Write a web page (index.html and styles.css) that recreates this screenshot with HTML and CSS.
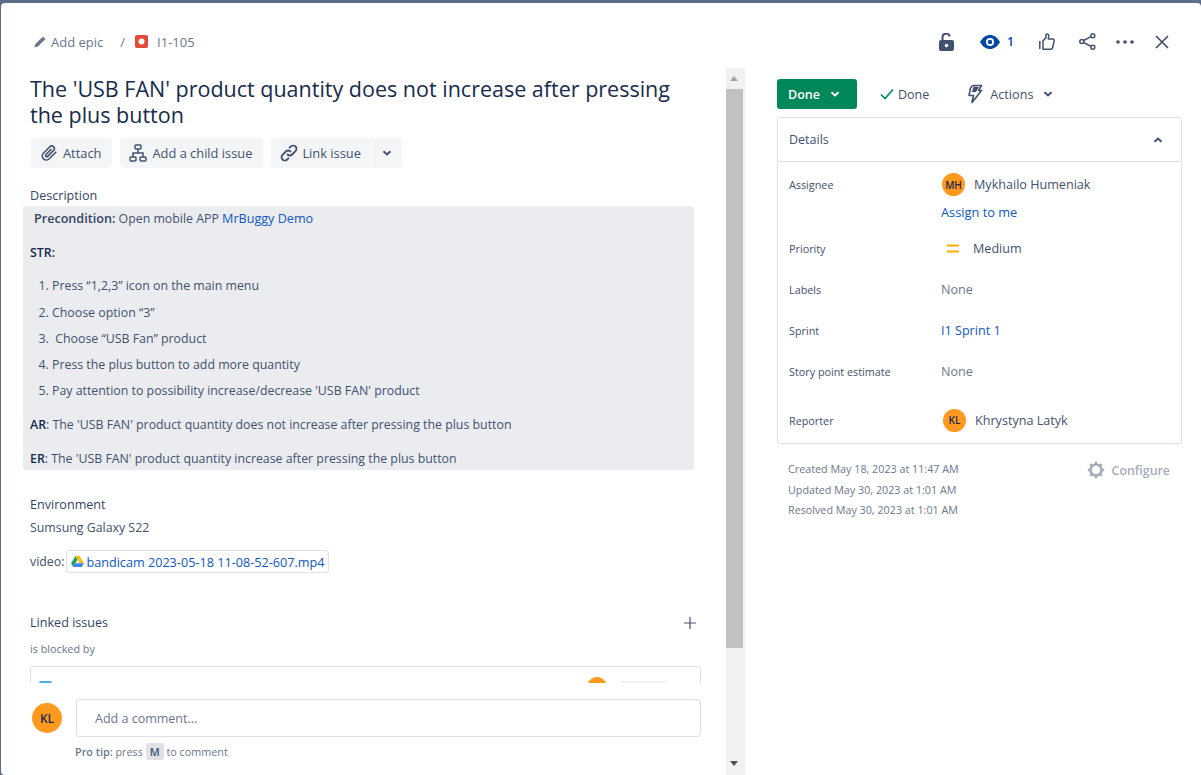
FILE: index.html
```html
<!DOCTYPE html>
<html lang="en">
<head>
    <meta charset="UTF-8">
    <meta name="viewport" content="width=device-width, initial-scale=1.0">
    <title>I1-105</title>
    <link rel="stylesheet" href="styles.css">
</head>
<body>
    <div class="modal">
        <header class="top-bar">
            <div class="crumbs">
                <svg class="crumb-pencil" width="14" height="14" viewBox="0 0 14 14"><path d="M10 1.500l2.500 2.500-7.600 7.600-3.400.9.900-3.400z" fill="#6b778c"/></svg>
                <span class="crumb-epic">Add epic</span>
                <span class="crumb-slash">/</span>
                <svg class="crumb-bug" width="13" height="13" viewBox="0 0 13 13"><rect width="13" height="13" rx="2" fill="#e5493a"/><circle cx="6.500" cy="6.500" r="3" fill="#fff"/></svg>
                <span class="crumb-key">I1-105</span>
            </div>
            <div class="top-actions">
                <svg class="act-lock" width="15" height="18" viewBox="0 0 15 18"><path d="M3.500 8V4.500a3.700 3.700 0 0 1 7.300-1" fill="none" stroke="#42526e" stroke-width="2"/><rect y="7" width="15" height="11" rx="2" fill="#42526e"/><circle cx="7.500" cy="12.500" r="1.700" fill="#fff"/></svg>
                <span class="watch">
                    <svg width="20" height="14" viewBox="0 0 20 14"><path d="M0 7c2.500-4.500 6-7 10-7s7.500 2.500 10 7c-2.500 4.500-6 7-10 7S2.500 11.500 0 7z" fill="#0747a6"/><circle cx="10" cy="7" r="4" fill="#fff"/><circle cx="10" cy="7" r="2.200" fill="#0747a6"/></svg>
                    <span>1</span>
                </span>
                <svg class="act-like" width="16" height="17" viewBox="0 0 16 17"><path d="M.8 8v8M4 8l3-3.500V1.700c0-1.200 2.600-1.200 2.800.8L9.300 6h4.200c1.300 0 1.900 1 1.600 2.200l-1.400 6.300c-.2 1-.9 1.700-2 1.700H4z" fill="none" stroke="#42526e" stroke-width="1.500" stroke-linejoin="round"/></svg>
                <svg class="act-share" width="17" height="17" viewBox="0 0 17 17"><g fill="none" stroke="#42526e" stroke-width="1.500"><circle cx="13.800" cy="2.800" r="2"/><circle cx="2.800" cy="8.500" r="2"/><circle cx="13.800" cy="14.200" r="2"/><path d="M4.600 7.500l7.400-3.800M4.600 9.500l7.400 3.800"/></g></svg>
                <svg class="act-more" width="18" height="4" viewBox="0 0 18 4"><g fill="#42526e"><circle cx="2" cy="2" r="1.800"/><circle cx="9" cy="2" r="1.800"/><circle cx="16" cy="2" r="1.800"/></g></svg>
                <svg class="act-close" width="14" height="14" viewBox="0 0 14 14"><path d="M1 1l12 12M13 1L1 13" stroke="#42526e" stroke-width="1.700" fill="none"/></svg>
            </div>
        </header>

        <div class="columns">
            <section class="left-col">
                <div class="left-main">
                    <div class="scroll-area">
                        <h1 class="issue-title">The 'USB FAN' product quantity does not increase after pressing the plus button</h1>
                        <div class="tool-row">
                            <button class="tool-btn">
                                <svg width="18" height="18" viewBox="0 0 18 18"><path d="M15.800 8.200l-6.600 6.600a3.900 3.900 0 0 1-5.800-5.500l6.400-6.500a2.600 2.600 0 0 1 3.800 3.600l-6 6a1.200 1.200 0 0 1-1.800-1.700l5.300-5.400" fill="none" stroke="#42526e" stroke-width="1.600" stroke-linecap="round"/></svg>
                                Attach
                            </button>
                            <button class="tool-btn">
                                <svg width="18" height="18" viewBox="0 0 18 18"><g fill="none" stroke="#42526e" stroke-width="1.500"><rect x="6" y="1" width="6" height="4" rx="1"/><rect x="1" y="13" width="6" height="4" rx="1"/><rect x="11" y="13" width="6" height="4" rx="1"/><path d="M9 5v4M4 13v-4h10v4"/></g></svg>
                                Add a child issue
                            </button>
                            <div class="split-btn">
                                <button class="tool-btn split-main">
                                    <svg width="18" height="18" viewBox="0 0 18 18"><g fill="none" stroke="#42526e" stroke-width="1.800" stroke-linecap="round"><path d="M7.500 10.500a3.300 3.300 0 0 0 4.700 0l3.300-3.300a3.300 3.300 0 0 0-4.700-4.700L9.600 3.700"/><path d="M10.500 7.500a3.300 3.300 0 0 0-4.700 0l-3.300 3.300a3.300 3.300 0 0 0 4.700 4.700l1.200-1.200"/></g></svg>
                                    Link issue
                                </button>
                                <button class="tool-btn split-more">
                                    <svg width="10" height="6" viewBox="0 0 10 6"><path d="M1.500 1.200L5 4.500l3.500-3.300" fill="none" stroke="#42526e" stroke-width="2"/></svg>
                                </button>
                            </div>
                        </div>

                        <h2 class="field-heading heading-desc">Description</h2>
                        <div class="description">
                            <p class="precondition"><strong>Precondition:</strong> Open mobile APP <a href="#">MrBuggy Demo</a></p>
                            <p class="str-line"><strong class="dark">STR:</strong></p>
                            <ol class="steps">
                                <li>Press “1,2,3” icon on the main menu</li>
                                <li>Choose option “3”</li>
                                <li>&nbsp;Choose “USB Fan” product</li>
                                <li>Press the plus button to add more quantity</li>
                                <li>Pay attention to possibility increase/decrease 'USB FAN' product</li>
                            </ol>
                            <p><strong class="dark">AR</strong>: The 'USB FAN' product quantity does not increase after pressing the plus button</p>
                            <p><strong class="dark">ER</strong>: The 'USB FAN' product quantity increase after pressing the plus button</p>
                        </div>

                        <h2 class="field-heading heading-env">Environment</h2>
                        <p class="env-line">Sumsung Galaxy S22</p>
                        <p class="video-line">video:
                            <a class="file-chip" href="#">
                                <svg width="13" height="11" viewBox="0 0 14 12"><path d="M4.700 0h4.600l4.700 8H9.300z" fill="#fbbc04"/><path d="M4.700 0L0 8l2.300 4 4.700-8z" fill="#1ea362"/><path d="M2.300 12h9.400L14 8H4.700z" fill="#4285f4"/></svg>
                                bandicam 2023-05-18 11-08-52-607.mp4
                            </a>
                        </p>

                        <div class="linked-head">
                            <h2 class="field-heading">Linked issues</h2>
                            <svg width="12" height="12" viewBox="0 0 12 12"><path d="M6 0v12M0 6h12" stroke="#42526e" stroke-width="1.200" fill="none"/></svg>
                        </div>
                        <div class="blocked-label">is blocked by</div>
                        <div class="linked-card">
                            <span class="linked-type"></span>
                            <span class="linked-avatar"></span>
                            <span class="linked-status"></span>
                        </div>
                    </div>
                    <div class="comment-box">
                        <span class="avatar avatar-lg">KL</span>
                        <div class="comment-body">
                            <div class="comment-input">Add a comment...</div>
                            <div class="pro-tip"><strong>Pro tip:</strong> press <kbd>M</kbd> to comment</div>
                        </div>
                    </div>
                </div>
                <div class="scrollbar">
                    <span class="arrow arrow-up"></span>
                    <span class="thumb"></span>
                    <span class="arrow arrow-down"></span>
                </div>
            </section>

            <aside class="right-col">
                <div class="status-row">
                    <button class="status-btn">Done
                        <svg width="10" height="6" viewBox="0 0 10 6"><path d="M1.500 1.200L5 4.500l3.500-3.300" fill="none" stroke="#fff" stroke-width="2"/></svg>
                    </button>
                    <span class="resolution">
                        <svg width="14" height="12" viewBox="0 0 14 12"><path d="M1 6.500l4 4L13 1.500" fill="none" stroke="#00875a" stroke-width="1.700"/></svg>
                        Done
                    </span>
                    <span class="actions">
                        <svg width="16" height="20" viewBox="0 0 16 20"><path d="M7 1.500h7.500L11.500 6.500h3L5 18.500l1.500-7H2L3.500 4.500C3.700 3 5.500 1.500 7 1.500z" fill="none" stroke="#42526e" stroke-width="1.600" stroke-linejoin="round"/><path d="M6.500 2.500L5 8h4l3-5z" fill="#42526e"/></svg>
                        Actions
                        <svg class="actions-chevron" width="10" height="6" viewBox="0 0 10 6"><path d="M1.500 1.200L5 4.500l3.500-3.300" fill="none" stroke="#42526e" stroke-width="2"/></svg>
                    </span>
                </div>

                <div class="details">
                    <div class="details-head">
                        <span>Details</span>
                        <svg width="10" height="6" viewBox="0 0 10 6"><path d="M1.500 4.800L5 1.500l3.500 3.300" fill="none" stroke="#42526e" stroke-width="2"/></svg>
                    </div>
                    <div class="details-body">
                        <div class="row row-assignee">
                            <span class="row-label">Assignee</span>
                            <div class="row-value">
                                <div class="person assignee"><span class="avatar">MH</span>Mykhailo Humeniak</div>
                                <a class="assign-me" href="#">Assign to me</a>
                            </div>
                        </div>
                        <div class="row row-plain">
                            <span class="row-label">Priority</span>
                            <div class="row-value person">
                                <svg class="prio" width="12" height="9" viewBox="0 0 12 9"><path d="M0 1.500h12M0 7.500h12" stroke="#ffab00" stroke-width="2" fill="none"/></svg>
                                Medium
                            </div>
                        </div>
                        <div class="row row-plain">
                            <span class="row-label">Labels</span>
                            <div class="row-value muted">None</div>
                        </div>
                        <div class="row row-plain">
                            <span class="row-label">Sprint</span>
                            <div class="row-value"><a href="#">I1 Sprint 1</a></div>
                        </div>
                        <div class="row row-plain">
                            <span class="row-label">Story point estimate</span>
                            <div class="row-value muted">None</div>
                        </div>
                        <div class="row row-reporter">
                            <span class="row-label">Reporter</span>
                            <div class="row-value person reporter"><span class="avatar">KL</span>Khrystyna Latyk</div>
                        </div>
                    </div>
                </div>

                <div class="meta">
                    <div class="dates">
                        <div>Created May 18, 2023 at 11:47 AM</div>
                        <div>Updated May 30, 2023 at 1:01 AM</div>
                        <div>Resolved May 30, 2023 at 1:01 AM</div>
                    </div>
                    <div class="configure">
                        <svg width="18" height="18" viewBox="0 0 18 18"><circle cx="9" cy="9" r="5.500" fill="none" stroke="#a5adba" stroke-width="2.600"/><path d="M9 .8v3M9 14.200v3M.8 9h3M14.200 9h3M3.200 3.200l2 2M12.800 12.800l2 2M14.800 3.200l-2 2M5.200 12.800l-2 2" stroke="#a5adba" stroke-width="2.400"/></svg>
                        Configure
                    </div>
                </div>
            </aside>
        </div>
    </div>
</body>
</html>
```

FILE: styles.css
```css
* {
    box-sizing: border-box;
}

html, body {
    height: 100%;
}

body {
    margin: 0;
    padding-top: 3px;
    padding-left: 1px;
    background-color: #5d6c88;
    font-family: 'Open Sans', 'Noto Sans', sans-serif;
    font-size: 12.350px;
    color: #42526e;
    overflow: hidden;
}

a {
    color: #0f57c0;
    text-decoration: none;
}

button {
    font-family: inherit;
}

.modal {
    height: 772px;
    background-color: #fff;
    border-radius: 4px 4px 0 4px;
    overflow: hidden;
}

.top-bar {
    height: 65px;
    padding: 12px 32px 0 32px;
    display: flex;
    align-items: center;
    justify-content: space-between;
}

.crumbs {
    display: flex;
    align-items: center;
    font-size: 13px;
    color: #6b778c;
}

.crumb-epic {
    margin-left: 4px;
}

.crumb-slash {
    margin: 0 10px 0 17px;
}

.crumb-key {
    margin-left: 9px;
}

.top-actions {
    display: flex;
    align-items: center;
    color: #0747a6;
}

.watch {
    display: flex;
    align-items: center;
    gap: 7px;
    margin: 0 25px 0 26px;
    font-weight: 600;
}

.act-share {
    margin-left: 23.500px;
}

.act-more {
    margin-left: 20.500px;
}

.act-close {
    margin-left: 21px;
}

.columns {
    display: flex;
    height: 707px;
}

.left-col {
    width: 744px;
    display: flex;
    flex-shrink: 0;
}

.left-main {
    width: 724px;
    display: flex;
    flex-direction: column;
}

.scroll-area {
    height: 615px;
    padding: 8px 24px 0 29px;
    overflow: hidden;
}

.issue-title {
    margin: 0;
    font-size: 21.500px;
    line-height: 26px;
    font-weight: 500;
    color: #172b4d;
}

.tool-row {
    display: flex;
    gap: 8px;
    margin: 10px 0 0 1px;
}

.tool-btn {
    height: 30px;
    padding: 0 11px 0 9px;
    display: flex;
    align-items: center;
    gap: 5px;
    border: none;
    border-radius: 3px;
    background-color: #f4f5f7;
    color: #42526e;
    font-size: 12.850px;
}

.split-btn {
    display: flex;
    gap: 1px;
}

.split-main {
    width: 100px;
    padding-right: 0;
    gap: 4px;
    border-radius: 3px 0 0 3px;
}

.split-more {
    width: 30px;
    padding: 0;
    justify-content: center;
    border-radius: 0 3px 3px 0;
}

.field-heading {
    margin: 0;
    font-size: 12.600px;
    line-height: 16px;
    font-weight: 500;
    color: #344563;
}

.heading-desc {
    margin-top: 20px;
}

.description {
    margin: 2px 0 0 -7px;
    width: 671px;
    height: 264px;
    padding: 3px 7px;
    background-color: #ebecf0;
    border-radius: 3px;
    line-height: 20px;
}

.description p {
    margin: 0 0 14px;
}

.description .str-line {
    margin-bottom: 13px;
}

.precondition {
    padding-left: 4px;
}

.precondition strong,
.precondition a {
    font-size: 12.600px;
}

.description strong {
    font-weight: 600;
    color: #344563;
}

.description strong.dark {
    color: #172b4d;
}

.steps {
    margin: 0 0 14px;
    padding-left: 22px;
}

.steps li {
    margin-bottom: 6px;
}

.steps li:first-child {
    margin-bottom: 7px;
}

.steps li:last-child {
    margin-bottom: 0;
}

.heading-env {
    margin-top: 27px;
}

.env-line {
    margin: 5px 0 0;
    line-height: 20px;
}

.video-line {
    margin: 12px 0 0;
    line-height: 22px;
    display: flex;
    align-items: center;
    gap: 2px;
}

.file-chip {
    display: flex;
    align-items: center;
    gap: 2px;
    height: 23px;
    padding: 0 4px 0 4px;
    border: 1px solid #dfe1e6;
    border-radius: 3px;
    font-size: 12.650px;
}

.linked-head {
    margin-top: 42px;
    display: flex;
    align-items: center;
    justify-content: space-between;
    padding-right: 5px;
}

.blocked-label {
    margin-top: 10px;
    font-size: 10.800px;
    font-weight: 500;
    color: #6b778c;
}

.linked-card {
    position: relative;
    margin-top: 10px;
    height: 60px;
    border: 1px solid #dfe1e6;
    border-radius: 3px;
}

.linked-type {
    position: absolute;
    left: 8px;
    top: 14px;
    width: 13px;
    height: 13px;
    border-radius: 2px;
    background-color: #4bade8;
}

.linked-avatar {
    position: absolute;
    left: 556px;
    top: 10px;
    width: 20px;
    height: 20px;
    border-radius: 50%;
    background-color: #ff991f;
}

.linked-status {
    position: absolute;
    left: 589px;
    top: 14px;
    width: 47px;
    height: 18px;
    border-radius: 3px;
    background-color: #eef2f2;
}

.comment-box {
    display: flex;
    gap: 14px;
    padding: 21px 24px 0 31px;
    background-color: #fff;
}

.avatar {
    width: 23px;
    height: 23px;
    border-radius: 50%;
    background-color: #ff991f;
    color: #172b4d;
    font-size: 10px;
    font-weight: 600;
    display: inline-flex;
    align-items: center;
    justify-content: center;
    flex-shrink: 0;
}

.avatar-lg {
    width: 30px;
    height: 30px;
    margin-top: -1px;
    font-size: 12px;
}

.comment-body {
    flex: 1;
    margin-top: -5px;
}

.comment-input {
    height: 38px;
    padding-left: 18px;
    display: flex;
    align-items: center;
    border: 1px solid #dfe1e6;
    border-radius: 3px;
    font-size: 12.500px;
    color: #6b778c;
}

.pro-tip {
    margin: 7px 0 0 -1px;
    font-size: 10.800px;
    color: #6b778c;
}

.pro-tip strong {
    font-weight: 600;
}

kbd {
    padding: 1px 4px;
    border-radius: 3px;
    background-color: #dfe1e6;
    color: #42526e;
    font-family: inherit;
    font-weight: 600;
}

.scrollbar {
    width: 19px;
    margin-left: 1px;
    background-color: #f1f1f1;
    display: flex;
    flex-direction: column;
    align-items: flex-start;
    flex-shrink: 0;
}

.arrow {
    width: 0;
    height: 0;
    margin: 8px 0 8px 4px;
    border-left: 4px solid transparent;
    border-right: 4px solid transparent;
}

.arrow-up {
    border-bottom: 5px solid #a3a3a3;
}

.arrow-down {
    margin-top: auto;
    margin-bottom: 9px;
    border-top: 5px solid #505050;
}

.thumb {
    width: 17px;
    height: 559px;
    background-color: #c1c1c1;
}

.right-col {
    flex: 1;
    padding: 11px 19px 0 32px;
}

.status-row {
    display: flex;
    align-items: center;
    height: 30px;
    font-size: 12.500px;
}

.status-btn {
    width: 80px;
    height: 30px;
    padding: 0 0 0 11px;
    display: flex;
    align-items: center;
    gap: 10px;
    border: none;
    border-radius: 3px;
    background-color: #00875a;
    color: #fff;
    font-size: 12.500px;
    font-weight: 600;
}

.resolution {
    margin-left: 23px;
    display: flex;
    align-items: center;
    gap: 4px;
}

.actions {
    margin-left: 38px;
    display: flex;
    align-items: center;
    gap: 7px;
    font-size: 12.650px;
}

.actions-chevron {
    margin-left: 3px;
}

.details {
    margin-top: 8px;
    width: 405px;
    height: 327px;
    border: 1px solid #dfe1e6;
    border-radius: 3px;
}

.details-head {
    height: 44px;
    padding: 0 18px 0 11px;
    display: flex;
    align-items: center;
    justify-content: space-between;
    border-bottom: 1px solid #dfe1e6;
    font-size: 12.500px;
    font-weight: 500;
}

.details-body {
    padding: 0 11px;
}

.row {
    display: flex;
}

.row-label {
    width: 152px;
    flex-shrink: 0;
    font-size: 10.800px;
    color: #42526e;
}

.row-value {
    font-size: 12.600px;
}

.row-assignee {
    padding-top: 11px;
    height: 65.500px;
}

.row-assignee .row-label {
    padding-top: 4px;
}

.person {
    display: flex;
    align-items: center;
    gap: 9px;
}

.assignee {
    margin-left: 1px;
}

.assign-me {
    display: block;
    margin-top: 7px;
    font-size: 12.800px;
}

.prio {
    margin-left: 6px;
    margin-right: 5px;
}

.row-plain {
    height: 41px;
    align-items: center;
}

.muted {
    color: #6b778c;
}

.row-reporter {
    height: 50px;
    padding-top: 7px;
    align-items: center;
}

.reporter {
    margin-left: 2px;
}

.meta {
    margin-top: 15px;
    padding: 0 12px 0 11px;
    display: flex;
    justify-content: space-between;
}

.dates {
    font-size: 10.750px;
    line-height: 20.500px;
    color: #6b778c;
}

.configure {
    display: flex;
    align-items: center;
    gap: 7px;
    height: 22px;
    font-size: 12.400px;
    font-weight: 600;
    color: #a5adba;
}
```
